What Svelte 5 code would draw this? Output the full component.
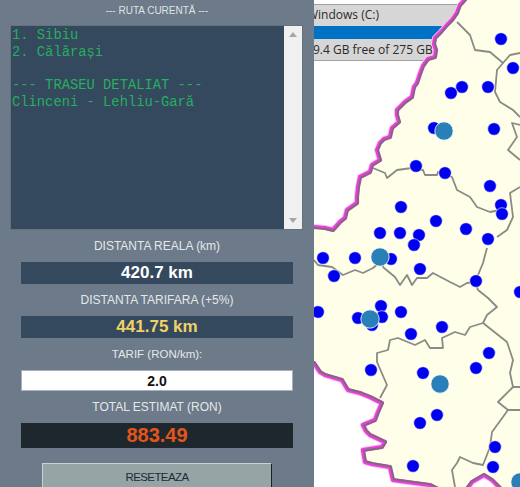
<script>
  // map coordinates are in page pixels, the svg viewBox starts at x=314
  const dots = [
    [501, 39], [513, 68], [462, 87], [451, 93], [488, 87], [434, 128], [494, 129],
    [416, 166], [445, 173], [490, 186], [501, 205], [502, 214], [401, 207], [436, 221],
    [466, 229], [380, 233], [400, 233], [419, 235], [414, 245], [488, 239],
    [323, 258], [355, 258], [391, 259], [334, 276], [420, 269], [476, 281], [520, 292],
    [318, 312], [381, 306], [358, 318], [382, 317], [372, 325], [401, 312], [442, 327],
    [411, 334], [371, 370], [423, 373], [476, 368], [489, 353], [437, 415], [420, 423],
    [495, 447], [493, 467], [413, 466]
  ];
  const hubs = [
    [444, 131], [380, 257], [370, 319], [440, 384], [520, 482]
  ];
  const land = 'M467 -3 L463 2 L460 5 L458 10 L457 13 L452 20 L447 25 L441 32 L435 38 L434 44 L436 50 L435 57 L428 59 L423 66 L420 74 L417 83 L414 87 L412 97 L405 102 L397 110 L397 115 L399 122 L392 128 L390 137 L384 139 L380 143 L377 150 L380 160 L372 165 L370 172 L360 177 L358 187 L357 197 L357 203 L347 210 L345 218 L340 222 L333 230 L325 228 L314 227 L300 230 L300 360 L314 363 L320 372 L325 375 L342 380 L348 390 L360 393 L370 397 L382 403 L378 412 L375 420 L363 425 L366 431 L370 435 L385 442 L382 447 L363 450 L365 462 L372 464 L390 467 L393 480 L430 485 L440 490 L466 490 L472 482 L484 475 L492 480 L502 490 L530 490 L530 -3 Z';
  const regions = [
    'M457 22 L470 35 L475 50 L490 52 L503 63 L497 70 L495 92 L500 102 L513 110 L520 117',
    'M503 63 L510 55 L520 53',
    'M520 125 L512 123 L517 137 L508 150 L520 160',
    'M373 168 L385 173 L387 178 L397 170 L412 168 L423 170 L425 175 L437 175 L438 172 L452 177 L457 190 L470 197 L477 207 L490 212 L500 210',
    'M520 187 L510 193 L513 217 L507 230 L497 237',
    'M487 248 L483 263 L478 275',
    'M314 260 L318 265 L332 267 L343 275 L355 270 L363 273 L373 268 L380 262 L384 268 L395 277 L400 285 L407 275 L412 285 L417 278 L427 278 L433 273 L450 282 L460 287 L467 283 L475 282 L478 290 L488 298 L497 307 L487 315 L483 323 L470 327 L465 335 L455 332 L442 338 L443 348 L430 348 L425 340 L415 345 L398 338 L390 340 L388 350 L377 353 L377 362 L387 385 L380 398',
    'M483 323 L507 342 L513 360 L510 373 L513 387 L520 387',
    'M513 387 L498 402 L508 410 L520 410',
    'M508 410 L492 432 L490 447 L483 465 L473 463 L460 457 L457 463 L452 470 L455 487'
  ];
</script>

<div class="page">
  <aside class="panel">
    <div class="title">--- RUTA CURENTĂ ---</div>
    <div class="listbox">
      <pre class="route">1. Sibiu
2. Călărași

--- TRASEU DETALIAT ---
Clinceni - Lehliu-Gară</pre>
      <div class="scrollbar">
        <span class="arrow up"></span>
        <span class="arrow down"></span>
      </div>
    </div>

    <div class="label">DISTANTA REALA (km)</div>
    <div class="value white">420.7 km</div>
    <div class="label">DISTANTA TARIFARA (+5%)</div>
    <div class="value yellow">441.75 km</div>
    <div class="label small">TARIF (RON/km):</div>
    <input class="tarif" type="text" value="2.0" />
    <div class="label">TOTAL ESTIMAT (RON)</div>
    <div class="value total">883.49</div>
    <button class="reset">RESETEAZA</button>
  </aside>

  <main class="map">
    <div class="drive">
      <div class="drive-name">Windows (C:)</div>
      <div class="drive-bar"></div>
      <div class="drive-free">9.4 GB free of 275 GB</div>
    </div>
    <svg class="canvas" viewBox="314 0 206 487" width="206" height="487">
      <defs>
        <clipPath id="land"><path d={land} /></clipPath>
      </defs>
      <path d={land} fill="none" stroke="#f9c4f2" stroke-width="6" stroke-linejoin="round" />
      <path d={land} fill="#fefee9" stroke="#e83fdc" stroke-width="4.2" stroke-linejoin="round" />
      <g clip-path="url(#land)">
        <path d={land} fill="none" stroke="#73706f" stroke-width="3.4" stroke-linejoin="round" />
        {#each regions as d}
          <path {d} fill="none" stroke="#8a8a86" stroke-width="1.8" stroke-linejoin="round" />
        {/each}
        {#each dots as [x, y]}
          <circle cx={x} cy={y} r="6.3" fill="#0000f0" stroke="#fff" stroke-width="0.6" />
        {/each}
        {#each hubs as [x, y]}
          <circle cx={x} cy={y} r="9.2" fill="#2980b9" stroke="#fff" stroke-width="0.8" />
        {/each}
      </g>
    </svg>
  </main>
</div>

<style>
  :global(body) {
    margin: 0;
    overflow: hidden;
  }

  .page {
    display: flex;
    width: 520px;
    height: 487px;
    overflow: hidden;
    font-family: "Liberation Sans", Arial, sans-serif;
  }

  .panel {
    flex: 0 0 314px;
    display: flex;
    flex-direction: column;
    align-items: center;
    background: #6c7a89;
  }

  .panel > * {
    flex: none;
  }

  .title {
    height: 25px;
    line-height: 22px;
    font-size: 10px;
    color: #dfe3e6;
  }

  .listbox {
    display: flex;
    width: 293px;
    height: 205px;
    box-sizing: border-box;
    border: 1px solid #64717f;
    margin-bottom: 8px;
    margin-right: 1px;
  }

  .route {
    flex: 1;
    margin: 0;
    padding: 2px 1px 0;
    background: #34495e;
    color: #27ae60;
    font-family: "Liberation Mono", "Courier New", monospace;
    font-size: 13.8px;
    line-height: 16.8px;
  }

  .scrollbar {
    flex: 0 0 18px;
    position: relative;
    background: #f0f0f0;
  }

  .arrow {
    position: absolute;
    left: 5px;
    width: 0;
    height: 0;
    border-left: 4px solid transparent;
    border-right: 4px solid transparent;
  }

  .arrow.up {
    top: 6px;
    border-bottom: 5px solid #a6a6a6;
  }

  .arrow.down {
    bottom: 6px;
    border-top: 5px solid #a6a6a6;
  }

  .label {
    height: 16px;
    line-height: 16px;
    font-size: 12px;
    color: #e4e8ea;
  }

  .label.small {
    font-size: 11.5px;
  }

  .value {
    width: 272px;
    height: 22px;
    line-height: 22px;
    margin: 8px 0;
    background: #34495e;
    text-align: center;
    font-size: 17px;
    font-weight: bold;
  }

  .white {
    color: #fff;
  }

  .yellow {
    color: #f1d265;
  }

  .tarif {
    width: 272px;
    height: 21px;
    box-sizing: border-box;
    margin: 8px 0;
    padding: 0;
    border: 1px solid #a9b0b7;
    background: #fff;
    text-align: center;
    font-family: inherit;
    font-size: 14px;
    font-weight: bold;
    color: #111;
  }

  .value.total {
    height: 25px;
    line-height: 25px;
    margin-bottom: 15px;
    background: #1f272e;
    color: #e4551a;
    font-size: 20px;
  }

  .reset {
    width: 230px;
    height: 32px;
    box-sizing: border-box;
    padding: 0 0 4px;
    border: 1px solid;
    border-color: #c9d2d3 #1c2226 #1c2226 #c9d2d3;
    background: #95a5a6;
    color: #1f2a36;
    font-family: inherit;
    font-size: 11.5px;
    letter-spacing: -0.6px;
  }

  .map {
    flex: 1;
    position: relative;
    overflow: hidden;
    background: #fff;
  }

  .canvas {
    position: absolute;
    top: 0;
    left: 0;
  }

  .drive {
    margin-top: 4px;
    height: 57px;
    box-sizing: border-box;
    border-top: 1px solid #a2a2a2;
    border-bottom: 1px solid #a2a2a2;
    background: #d6d6d6;
    font-family: "Open Sans", sans-serif;
    font-size: 12px;
    color: #2a2a2a;
    white-space: nowrap;
  }

  .drive-name {
    height: 21px;
    line-height: 20px;
    margin-left: -7px;
  }

  .drive-bar {
    height: 13px;
    background: #0072c6;
  }

  .drive-free {
    line-height: 22px;
    margin-left: -1px;
  }
</style>
